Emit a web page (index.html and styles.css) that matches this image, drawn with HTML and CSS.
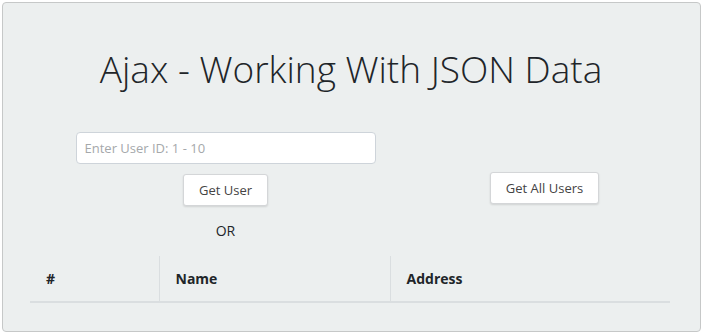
FILE: index.html
```html
<!DOCTYPE html>
<html lang="en">
<head>
  <meta charset="UTF-8">
  <meta name="viewport" content="width=device-width, initial-scale=1.0">
  <title>Ajax - Working With JSON Data</title>
  <link rel="stylesheet" href="styles.css">
</head>
<body>
  <div class="jumbotron">
    <h1 class="title">Ajax - Working With JSON Data</h1>
    <div class="controls">
      <div class="col">
        <input class="user-id" type="text" placeholder="Enter User ID: 1 - 10">
        <button class="btn" id="getUser">Get User</button>
        <p class="or">OR</p>
      </div>
      <div class="col col-right">
        <button class="btn" id="getUsers">Get All Users</button>
      </div>
    </div>
    <table class="users">
      <thead>
        <tr>
          <th class="c-id">#</th>
          <th class="c-name">Name</th>
          <th class="c-address">Address</th>
        </tr>
      </thead>
      <tbody id="output"></tbody>
    </table>
  </div>
</body>
</html>
```

FILE: styles.css
```css
* {
  box-sizing: border-box;
}

body {
  margin: 2px;
  font-family: "Open Sans", "Liberation Sans", sans-serif;
  font-size: 14px;
  color: #212529;
}

.jumbotron {
  width: 699px;
  height: 330px;
  background: #ecefef;
  border: 1px solid #c6c8c8;
  border-radius: 4px;
  padding: 41px 28px 0 27px;
}

.title {
  margin: 0;
  text-align: center;
  font-weight: 300;
  font-size: 37px;
  line-height: 50px;
}

.controls {
  display: grid;
  grid-template-columns: 319px 319px;
  margin: 38px 0 0 36px;
}

.col {
  display: flex;
  flex-direction: column;
  align-items: center;
}

.col-right {
  padding-top: 30px;
}

.user-id {
  width: 300px;
  height: 32px;
  padding: 0 8px;
  border: 1px solid #ced4da;
  border-radius: 4px;
  font-family: inherit;
  font-size: 13px;
  color: #495057;
  background: #fff;
}

.user-id::placeholder {
  color: #a5a8ab;
}

.btn {
  margin-top: 10px;
  height: 32px;
  padding: 0 15px;
  background: #fff;
  border: 1px solid #d4d6d8;
  border-radius: 3px;
  box-shadow: 0 1px 2px rgba(0, 0, 0, 0.12);
  font-family: inherit;
  font-size: 13px;
  color: #444;
}

.or {
  margin: 10px 0 0;
  line-height: 30px;
}

.users {
  width: 640px;
  margin-top: 10px;
  border-collapse: collapse;
}

.users th {
  text-align: left;
  padding: 12px 16px;
  line-height: 21px;
  font-weight: 700;
  border-bottom: 2px solid #dadee0;
}

.users th + th {
  border-left: 1px solid #dadee0;
}

.c-id {
  width: 129px;
}

.c-name {
  width: 231px;
}
```
